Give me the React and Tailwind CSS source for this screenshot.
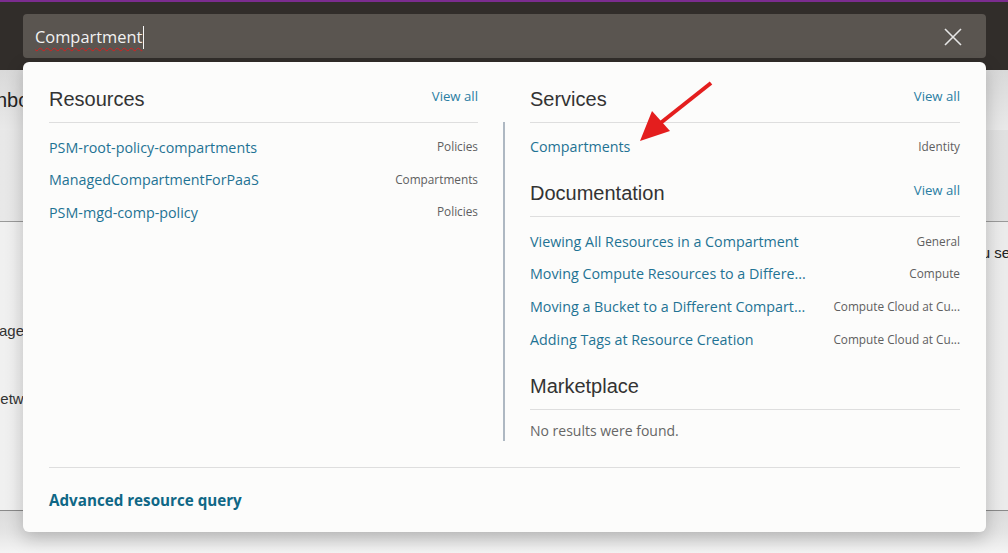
import React from "react";

const seg = { fontFamily: '"Open Sans", "Noto Sans", sans-serif' };
const ari = { fontFamily: '"Liberation Sans", Arial, sans-serif' };

function Row({ title, label, h = "h-[32.5px]" }) {
  return (
    <div className={"flex items-center justify-between " + h} style={seg}>
      <span className="text-[14.3px] text-[#1f7394] whitespace-nowrap">{title}</span>
      <span className="text-[11.8px] text-[#5f5f5f] whitespace-nowrap">{label}</span>
    </div>
  );
}

function Heading({ title, viewAll, className = "" }) {
  return (
    <div className={"flex items-center justify-between h-[28px] " + className}>
      <span className="text-[20px] text-[#333]" style={ari}>{title}</span>
      {viewAll && (
        <span className="text-[13.2px] text-[#2a7ea3] pb-[5px]" style={seg}>View all</span>
      )}
    </div>
  );
}

export default function App() {
  return (
    <div className="relative w-[1008px] h-[553px] overflow-hidden bg-[#f1f1f1]" style={ari}>
      {/* background page */}
      <div className="flex flex-col h-full">
        <div className="h-[70px] bg-[#312d2a] border-t-2 border-[#7b2c8f]" />
        <div className="h-[60px] bg-gradient-to-b from-[#d9d9d9] to-[#e9e9e9] flex items-center justify-between">
          <span className="text-[20px] text-[#222] -ml-[4px]">nbo</span>
        </div>
        <div className="h-[92px] bg-gradient-to-r from-[#e8e8e8] via-[#f3f3f3] to-[#e0e0e0] border-b border-[#9a9a9a]" />
        <div className="h-[289px] bg-gradient-to-r from-[#f0f0f0] via-[#f7f7f7] to-[#ebebeb] border-b border-[#8a8a8a]">
          <div className="flex justify-end pt-[20px]">
            <span className="text-[15px] text-[#222] -mr-[2px] whitespace-nowrap">u se</span>
          </div>
          <div className="pt-[55px] text-[15px] text-[#333] -ml-[1px]">age</div>
          <div className="pt-[46px] text-[15px] text-[#333] -ml-[3px]">letw</div>
        </div>
        <div className="flex-1 bg-gradient-to-b from-[#dcdcdc] via-[#e4e4e4] to-[#f4f4f4]" />
      </div>

      {/* search box */}
      <div className="absolute left-[23px] top-[14px] w-[963px] h-[44px] rounded-[4px] bg-[#5a5550] flex items-center pl-[12px] pr-[22px]">
        <span
          className="text-[16.4px] text-[#f2f2f2] underline decoration-wavy decoration-[#d42020] decoration-[1px] underline-offset-[4px] pt-[3px]"
          style={seg}
        >
          Compartment
        </span>
        <span className="ml-[1px] mt-[3px] w-[1px] h-[23px] bg-[#f5f5f5]" />
        <div className="flex-1" />
        <svg width="20" height="20" viewBox="0 0 20 20" className="mr-[1px] mt-[2px]">
          <path d="M2 2 L18 18 M18 2 L2 18" stroke="#e6e6e6" strokeWidth="1.6" fill="none" />
        </svg>
      </div>

      {/* dropdown panel */}
      <div className="absolute left-[23px] top-[62px] w-[963px] h-[470px] rounded-[6px] bg-[#fcfcfb] shadow-[0_6px_18px_rgba(0,0,0,0.22)] flex flex-col">
        <div className="h-[405px] flex px-[26px] pt-[23px]">
          {/* Resources */}
          <div className="w-[429px] flex flex-col">
            <Heading title="Resources" viewAll />
            <div className="mt-[9px] border-t border-[#dedede] pt-[8px]">
              <Row title="PSM-root-policy-compartments" label="Policies" />
              <Row title="ManagedCompartmentForPaaS" label="Compartments" />
              <Row title="PSM-mgd-comp-policy" label="Policies" />
            </div>
          </div>
          <div className="ml-[25px] mr-[25px] mt-[37px] h-[319px] w-[2px] bg-[#aeb8c2]" />
          {/* Services etc */}
          <div className="flex-1 flex flex-col">
            <Heading title="Services" viewAll />
            <div className="mt-[9px] border-t border-[#dedede] pt-[8px]">
              <Row h="h-[32px]" title="Compartments" label="Identity" />
            </div>
            <Heading title="Documentation" viewAll className="mt-[16px]" />
            <div className="mt-[9px] border-t border-[#dedede] pt-[8px]">
              <Row h="h-[32.8px]" title="Viewing All Resources in a Compartment" label="General" />
              <Row h="h-[32.8px]" title="Moving Compute Resources to a Differe..." label="Compute" />
              <Row h="h-[32.8px]" title="Moving a Bucket to a Different Compart..." label="Compute Cloud at Cu..." />
              <Row h="h-[32.8px]" title="Adding Tags at Resource Creation" label="Compute Cloud at Cu..." />
            </div>
            <Heading title="Marketplace" className="mt-[16px]" />
            <div className="mt-[9px] border-t border-[#dedede] pt-[8px]">
              <div className="h-[24px] flex items-center text-[14px] text-[#666]" style={seg}>
                No results were found.
              </div>
            </div>
          </div>
        </div>
        <div className="mx-[26px] border-t border-[#dedede] flex-1 flex items-center">
          <span className="text-[15.2px] font-bold text-[#0f6786]" style={seg}>
            Advanced resource query
          </span>
        </div>
      </div>

      {/* red arrow annotation */}
      <svg className="absolute left-[630px] top-[75px]" width="90" height="75" viewBox="0 0 90 75">
        <path d="M81 8 L28 50" stroke="#e41e1e" strokeWidth="4" strokeLinecap="butt" fill="none" />
        <polygon points="10,66 22,36 40,56" fill="#e41e1e" />
      </svg>
    </div>
  );
}
